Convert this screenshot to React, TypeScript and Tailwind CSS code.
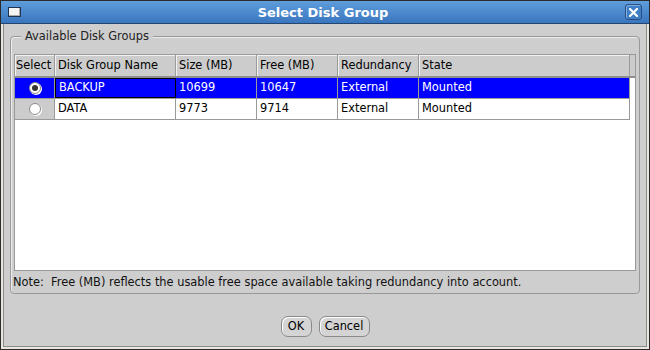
import React from "react";

type Row = {
  name: string;
  size: string;
  free: string;
  redundancy: string;
  state: string;
  selected: boolean;
};

const rows: Row[] = [
  { name: "BACKUP", size: "10699", free: "10647", redundancy: "External", state: "Mounted", selected: true },
  { name: "DATA", size: "9773", free: "9714", redundancy: "External", state: "Mounted", selected: false },
];

const Radio = ({ checked }: { checked: boolean }) => (
  <div className="w-[12px] h-[12px] rounded-full border border-[#8a8a8a] bg-white flex items-center justify-center shadow-[1px_1px_0_#ffffff]">
    {checked && <div className="w-[6px] h-[6px] rounded-full bg-[#333333]" />}
  </div>
);

const headCell = "h-full flex items-center border-r border-[#9a9a9a] shadow-[inset_1px_1px_0_#f2f2f2] overflow-hidden whitespace-nowrap";

const App = () => {
  return (
    <div className="w-[650px] h-[350px] bg-[#2b2b2b] p-[1px] font-['DejaVu_Sans',sans-serif] text-[11.4px] text-black">
      <div className="w-full h-full flex flex-col bg-[#e9e6df] px-[2px] pb-[2px]">
        {/* title bar */}
        <div className="h-[23px] -mx-[2px] flex items-center px-[7px] bg-gradient-to-b from-[#5f9ddb] to-[#3a76bf] border-b border-[#24456e]">
          <div className="w-[13px] h-[10px] bg-[#f4f4f4] border border-[#1f3350] shadow-[inset_-1px_-1px_0_#a9a9a9]" />
          <div className="flex-1 text-center text-white font-bold text-[13px] leading-none">Select Disk Group</div>
          <div className="w-[17px] h-[16px] rounded-[3px] border border-[#2a4f80] bg-[#3f7fc6] shadow-[inset_1px_1px_0_#7fb0e4] flex items-center justify-center">
            <svg width="9" height="9" viewBox="0 0 9 9">
              <path d="M1 1 L8 8 M8 1 L1 8" stroke="#ffffff" strokeWidth="2.2" strokeLinecap="square" />
            </svg>
          </div>
        </div>

        {/* body */}
        <div className="flex-1 bg-[#cecece] border-l border-r border-b border-[#8c8c8c] flex flex-col px-[6px] pt-[6px]">
          {/* group box */}
          <div className="relative mt-[6px] h-[258px] border border-[#999999] rounded-[4px] shadow-[inset_1px_1px_0_#ececec] flex flex-col px-[3px] pt-[17px]">
            <div className="absolute -top-[8px] left-[10px] bg-[#cecece] px-[4px] leading-[15px] text-[#222]">Available Disk Groups</div>

            {/* table */}
            <div className="h-[217px] border border-[#999999] bg-white flex flex-col">
              <div className="h-[23px] flex bg-[#cccccc] border-b-2 border-[#8e8e8e]">
                <div className={`${headCell} w-[40px] pl-[1px]`}>Select</div>
                <div className={`${headCell} w-[121px] px-[3px]`}>Disk Group Name</div>
                <div className={`${headCell} w-[81px] px-[3px]`}>Size (MB)</div>
                <div className={`${headCell} w-[81px] px-[3px]`}>Free (MB)</div>
                <div className={`${headCell} w-[81px] px-[3px]`}>Redundancy</div>
                <div className={`${headCell} w-[211px] px-[3px]`}>State</div>
                <div className="flex-1" />
              </div>
              {rows.map((r) => {
                const cell = `h-full flex items-center px-[3px] border-r border-[#9a9a9a] ${r.selected ? "text-white" : ""}`;
                return (
                  <div key={r.name} className="h-[21px] flex">
                    <div className={`h-full w-[615px] flex border-b border-[#9a9a9a] ${r.selected ? "bg-[#0000ff]" : "bg-white"}`}>
                      <div className={`h-full w-[40px] flex items-center justify-center border-r border-[#9a9a9a] ${r.selected ? "" : "bg-[#cccccc]"}`}>
                        <Radio checked={r.selected} />
                      </div>
                      <div className={`${cell} w-[121px] ${r.selected ? "border border-black" : ""}`}>{r.name}</div>
                      <div className={`${cell} w-[81px]`}>{r.size}</div>
                      <div className={`${cell} w-[81px]`}>{r.free}</div>
                      <div className={`${cell} w-[81px]`}>{r.redundancy}</div>
                      <div className={`${cell} w-[211px]`}>{r.state}</div>
                    </div>
                  </div>
                );
              })}
            </div>

            <div className="h-[22px] flex items-center pt-[2px] -ml-[1px] text-[#111]">
              Note:&nbsp; Free (MB) reflects the usable free space available taking redundancy into account.
            </div>
          </div>

          {/* buttons */}
          <div className="flex-1 flex items-start justify-center gap-[7px] pt-[22px]">
            <button className="h-[21px] w-[31px] rounded-[7px] border border-[#8a8a8a] bg-[#d4d4d4] shadow-[inset_1px_1px_0_#ffffff] leading-none">OK</button>
            <button className="h-[21px] w-[51px] rounded-[7px] border border-[#8a8a8a] bg-[#d4d4d4] shadow-[inset_1px_1px_0_#ffffff] leading-none">Cancel</button>
          </div>
        </div>
      </div>
    </div>
  );
};

export default App;
